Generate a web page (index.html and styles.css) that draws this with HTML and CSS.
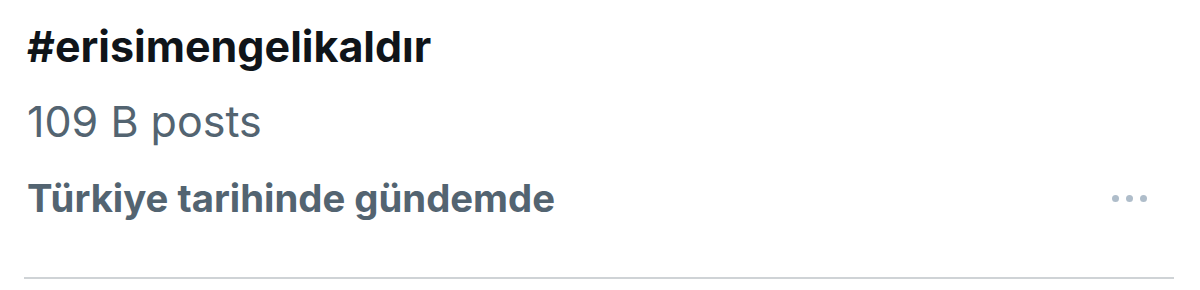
FILE: index.html
```html
<!DOCTYPE html>
<html lang="tr">
<head>
  <meta charset="UTF-8">
  <meta name="viewport" content="width=device-width, initial-scale=1.0">
  <title>Gündem</title>
  <link rel="stylesheet" href="styles.css">
</head>
<body>

  <div class="trend">
    <div class="trend-body">
      <h2 class="trend-name">#erisimengelikaldır</h2>
      <p class="trend-count">109 B posts</p>
      <p class="trend-meta">Türkiye tarihinde gündemde</p>
    </div>
    <!-- daha fazla menüsü -->
    <button class="more" aria-label="Daha fazla">
      <span></span><span></span><span></span>
    </button>
  </div>

</body>
</html>
```

FILE: styles.css
```css
body {
  font-family: 'Inter', 'Liberation Sans', sans-serif;
  background: #fff;
  margin: 0;
}
.trend {
  display: flex;
  justify-content: space-between;
  margin: 0 26px 0 24px;
  padding: 16px 0 47px 3px;
  border-bottom: 2px solid #cfd3d6;
}
.trend-body p,
.trend-name { margin: 0; }
.trend-name {
  font-size: 43px;
  font-weight: 700;
  line-height: 60px;
  color: #0f1419;
}
.trend-count {
  font-size: 43px;
  font-weight: 400;
  line-height: 90px;
  color: #536471;
}
.trend-meta {
  font-size: 38.3px;
  font-weight: 700;
  line-height: 64px;
  color: #536471;
}
.more {
  display: flex;
  gap: 7px;
  align-self: flex-end;
  margin: 0 27px 28px 0;
  padding: 0;
  border: none;
  background: none;
}
.more span {
  width: 7px;
  height: 7px;
  border-radius: 50%;
  background: #afbdca;
}
```
